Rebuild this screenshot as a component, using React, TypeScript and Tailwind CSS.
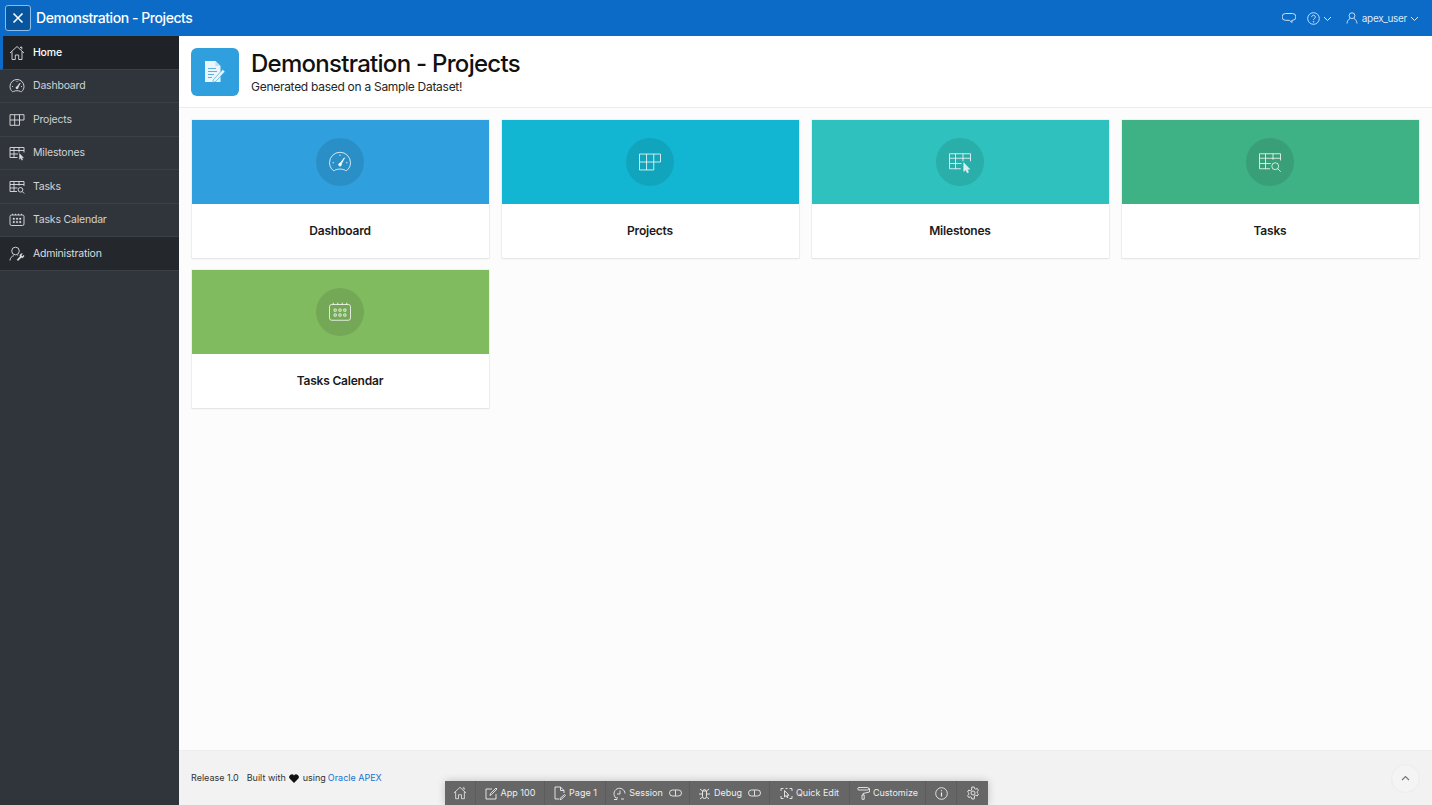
import type { ReactNode } from 'react';

function Svg({ size = 16, className = '', children }: { size?: number; className?: string; children: ReactNode }) {
  return (
    <svg width={size} height={size} viewBox="0 0 16 16" fill="none" stroke="currentColor" strokeWidth={size > 20 ? 0.65 : 0.9} className={className}>
      {children}
    </svg>
  );
}

const HomeIcon = ({ size }: { size?: number }) => (
  <Svg size={size}>
    <path d="M1 8 8 1.500 15 8M3 6.500V14.500H6.300V10H9.700V14.500H13V6.500M11.500 3V2h1.300v2.300" />
  </Svg>
);

const GaugeIcon = ({ size }: { size?: number }) => (
  <Svg size={size}>
    <path d="M3.400 13.600C1.900 12.300 1 10.500 1 8.500a7 7 0 0 1 14 0c0 2-.9 3.800-2.400 5.100-.5.400-1 0-1.500-.3-1.800-.8-4.400-.8-6.200 0-.5.300-1 .7-1.500.3Z" />
    <path d="M8 3v1M3 8.500h1M12 8.500h1" />
    <path d="M7.500 9.500 11 5.200 8.500 10Z" fill="currentColor" />
    <circle cx="8" cy="9.800" r=".9" fill="currentColor" />
  </Svg>
);

const TableIcon = ({ size }: { size?: number }) => (
  <Svg size={size}>
    <path d="M1 2.700h14v5.300H10.500V13.300H1ZM1 8h9.500M5.700 2.700v10.600M10.500 2.700V8" />
  </Svg>
);

const TablePointerIcon = ({ size }: { size?: number }) => (
  <Svg size={size}>
    <path d="M15 7.500V2.500H1v10h7.500M1 5.500h14M1 9h8M5 2.500v10M10 2.500v5" />
    <path d="M10.500 8.500v5.800l1.300-1.200 1 2.100.9-.4-1-2h1.800Z" fill="currentColor" strokeWidth={0.4} />
  </Svg>
);

const TableSearchIcon = ({ size }: { size?: number }) => (
  <Svg size={size}>
    <path d="M15 7V2.500H1v10h7M1 5.500h14M1 9h7.500M5 2.500v10M10 2.500v4" />
    <circle cx="11.500" cy="10.800" r="2.300" />
    <path d="m13.200 12.500 2 2" />
  </Svg>
);

const CalendarIcon = ({ size }: { size?: number }) => (
  <Svg size={size}>
    <rect x="1" y="3" width="14" height="10.500" rx="1.500" />
    <path d="M3.500 1.800v1.200M6.500 1.800v1.200M9.500 1.800v1.200M12.500 1.800v1.200" />
    <path d="M4 6h1.500v1.500H4ZM7.250 6h1.500v1.500h-1.500ZM10.500 6H12v1.500h-1.500ZM4 9.300h1.500v1.500H4ZM7.250 9.300h1.500v1.500h-1.500ZM10.500 9.300H12v1.500h-1.500Z" fill={size && size > 20 ? 'none' : 'currentColor'} strokeWidth={size && size > 20 ? 0.6 : 0.3} />
  </Svg>
);

const AdminIcon = ({ size }: { size?: number }) => (
  <Svg size={size}>
    <circle cx="6.500" cy="5" r="3.800" />
    <path d="M1 14.500c0-2.500 1.800-4.300 4-4.900M8.500 9.400l.7.200" />
    <path d="M9 14.800l3.200-3.200a2 2 0 0 0 2.700-2.500l-1.300 1.200-1-.3-.3-1 1.300-1.200a2 2 0 0 0-2.600 2.700L8 13.800Z" fill="currentColor" strokeWidth={0.3} />
  </Svg>
);

const PageEditIcon = () => (
  <svg width="22" height="24" viewBox="0 0 22 24">
    <path d="M1 1h10.500L16.500 6v16H1Z" fill="#eaf5fc" />
    <path d="M11.500 1v5h5Z" fill="#bfe0f4" />
    <path d="M4 8.500h8M4 11.500h9M4 14.500h6M4 17.500h4" stroke="#5fb0e2" strokeWidth="1.200" />
    <path d="m9.500 19.500 9.300-10 2.200 2-9.300 10-3 1Z" fill="#eaf5fc" stroke="#2f9fdf" strokeWidth=".6" />
  </svg>
);

const nav = [
  { label: 'Home', icon: <HomeIcon /> },
  { label: 'Dashboard', icon: <GaugeIcon /> },
  { label: 'Projects', icon: <TableIcon /> },
  { label: 'Milestones', icon: <TablePointerIcon /> },
  { label: 'Tasks', icon: <TableSearchIcon /> },
  { label: 'Tasks Calendar', icon: <CalendarIcon /> },
  { label: 'Administration', icon: <AdminIcon /> },
];

function navClass(label: string) {
  if (label === 'Home') return 'bg-[#1f2327] text-white font-medium border-l-[3px] border-l-[#0b6bc7] pl-[5px]';
  if (label === 'Administration') return 'bg-[#24282d] text-[#dcdddf] pl-[8px]';
  return 'bg-[#30353c] text-[#d0d2d4] pl-[8px]';
}

const cards = [
  { label: 'Dashboard', color: 'bg-[#309fdd]', circle: 'bg-[#2b8fc7]', icon: <GaugeIcon size={24} /> },
  { label: 'Projects', color: 'bg-[#13b6d2]', circle: 'bg-[#11a4bd]', icon: <TableIcon size={24} /> },
  { label: 'Milestones', color: 'bg-[#2ec1bd]', circle: 'bg-[#29aeaa]', icon: <TablePointerIcon size={24} /> },
  { label: 'Tasks', color: 'bg-[#3eb185]', circle: 'bg-[#389f78]', icon: <TableSearchIcon size={24} /> },
  { label: 'Tasks Calendar', color: 'bg-[#81bb5f]', circle: 'bg-[#74a856]', icon: <CalendarIcon size={24} /> },
];

function Toggle() {
  return (
    <svg width="13" height="8" viewBox="0 0 13 8" fill="none" stroke="currentColor" strokeWidth=".9" className="ml-[3px]">
      <rect x=".5" y="1" width="12" height="6" rx="3" />
      <path d="M6.500 1.200v5.600" />
    </svg>
  );
}

function DevItem({ icon, label, width, toggle }: { icon: ReactNode; label?: string; width: string; toggle?: boolean }) {
  return (
    <div className={`flex h-full items-center justify-center gap-[3px] border-r border-r-[#5c5c5c] last:border-r-0 ${width}`}>
      {icon}
      {label && <span>{label}</span>}
      {toggle && <Toggle />}
    </div>
  );
}

export default function App() {
  return (
    <div className="relative flex h-[805px] w-[1432px] flex-col overflow-hidden bg-[#fcfcfc] font-['Inter',sans-serif] text-[#161616]">
      <header className="flex h-9 shrink-0 items-center bg-[#0b6bc7] text-white">
        <button className="ml-[5px] flex h-[26px] w-[26px] items-center justify-center rounded-[3px] border border-[#8fbce6] bg-[#07559f]">
          <svg width="12" height="12" viewBox="0 0 12 12" stroke="currentColor" strokeWidth="1.600">
            <path d="m1.500 1.500 9 9M10.500 1.500l-9 9" />
          </svg>
        </button>
        <span className="ml-[5px] text-sm leading-none font-medium tracking-[-0.44px]">Demonstration - Projects</span>
        <div className="ml-auto flex items-center text-[10px] text-[#dbe9f7]">
          <svg width="14" height="14" viewBox="0 0 14 14" fill="none" stroke="currentColor" strokeWidth=".9">
            <path d="M3.500 2.500h7a2.700 2.700 0 0 1 0 6.800H9.800l.3 2.200-2.800-2.200H3.500a2.700 2.700 0 0 1 0-6.800Z" />
          </svg>
          <svg width="13" height="13" viewBox="0 0 13 13" fill="none" stroke="currentColor" strokeWidth=".9" className="ml-[11px]">
            <circle cx="6.500" cy="6.500" r="5.800" />
            <path d="M4.700 5a1.800 1.800 0 1 1 2.800 1.500c-.7.500-1 .800-1 1.500" />
            <circle cx="6.500" cy="9.800" r=".4" />
          </svg>
          <svg width="9" height="9" viewBox="0 0 9 9" fill="none" stroke="currentColor" className="ml-[3px]">
            <path d="m1 3 3.500 3.500L8 3" />
          </svg>
          <svg width="12" height="12" viewBox="0 0 12 12" fill="none" stroke="currentColor" strokeWidth=".9" className="ml-[14px]">
            <circle cx="6" cy="3.700" r="2.900" />
            <path d="M1 11.500c0-2.500 1.800-4.400 3-5M11 11.500c0-2.500-1.800-4.400-3-5" />
          </svg>
          <span className="ml-[4px] tracking-[-0.33px]">apex_user</span>
          <svg width="9" height="9" viewBox="0 0 9 9" fill="none" stroke="currentColor" className="mr-[13px] ml-[3px]">
            <path d="m1 3 3.500 3.500L8 3" />
          </svg>
        </div>
      </header>

      <div className="flex min-h-0 flex-1">
        <aside className="w-[179px] shrink-0 bg-[#30353c]">
          {nav.map(item => (
            <div
              key={item.label}
              className={`flex h-[33.5px] items-center gap-[8px] border-b border-b-[#3b4047] pt-[1px] text-[10.5px] tracking-[-0.2px] ${navClass(item.label)}`}
            >
              <span className="flex w-[17px] justify-center text-[#dfe0e2]">{item.icon}</span>
              <span>{item.label}</span>
            </div>
          ))}
        </aside>

        <main className="flex min-w-0 flex-1 flex-col">
          <section className="flex h-[72px] shrink-0 items-center gap-3 border-b border-b-[#ececec] bg-white px-3">
            <div className="flex h-12 w-12 items-center justify-center rounded-md bg-[#309fdd]">
              <PageEditIcon />
            </div>
            <div>
              <h1 className="text-2xl leading-[30px] font-medium tracking-[-0.72px] text-[#111]">Demonstration - Projects</h1>
              <p className="text-xs leading-4 tracking-[-0.28px] text-[#262626]">Generated based on a Sample Dataset!</p>
            </div>
          </section>

          <section className="grid flex-1 grid-cols-4 content-start gap-x-[13px] gap-y-3 px-[13px] py-3">
            {cards.map(card => (
              <div key={card.label} className="h-[138px] bg-white shadow-[0_0_0_1px_rgba(0,0,0,0.04),0_1px_2px_rgba(0,0,0,0.07)]">
                <div className={`flex h-[84px] items-center justify-center pr-px ${card.color}`}>
                  <div className={`flex h-12 w-12 items-center justify-center rounded-full text-white/80 ${card.circle}`}>
                    {card.icon}
                  </div>
                </div>
                <div className="flex h-[54px] items-center justify-center pr-px text-xs font-semibold tracking-[-0.2px] text-[#1b1b1b]">
                  {card.label}
                </div>
              </div>
            ))}
          </section>

          <footer className="flex h-[55px] shrink-0 items-center justify-between border-t border-t-[#ededed] bg-[#f2f2f2] px-3 text-[9px] text-[#333]">
            <div className="flex items-center">
              <span>Release 1.0</span>
              <span className="ml-[8px]">Built with</span>
              <svg width="10" height="9" viewBox="0 0 10 9" fill="#111" className="mr-[4px] ml-[3px]">
                <path d="M5 9 .8 4.800A2.500 2.500 0 0 1 5 1.500a2.500 2.500 0 0 1 4.200 3.300Z" />
              </svg>
              <span>using</span>
              <span className="ml-[2px] text-[#1a73cf]">Oracle APEX</span>
            </div>
            <button className="flex h-[29px] w-[29px] items-center justify-center rounded-full border border-[#ececec] bg-[#f4f4f4] text-[#777]">
              <svg width="9" height="6" viewBox="0 0 9 6" fill="none" stroke="currentColor" strokeWidth="1.200">
                <path d="M1 5 4.500 1.500 8 5" />
              </svg>
            </button>
          </footer>
        </main>
      </div>

      {/* apex developer toolbar, sits over the footer */}
      <div className="absolute bottom-0 left-[445px] flex h-6 w-[543px] items-center bg-[#666666] text-[9px] text-[#eeeeee] shadow-[0_0_8px_rgba(0,0,0,0.2)]">
        <DevItem width="w-[31px]" icon={<HomeIcon size={14} />} />
        <DevItem width="w-[69px]" label="App 100" icon={
          <svg width="13" height="13" viewBox="0 0 13 13" fill="none" stroke="currentColor" strokeWidth=".9">
            <path d="M11 7v5H1V2h6M5 8.500l.4-2L11 1l1 1-5.500 5.600Z" />
          </svg>
        } />
        <DevItem width="w-[61px]" label="Page 1" icon={
          <svg width="13" height="14" viewBox="0 0 13 14" fill="none" stroke="currentColor" strokeWidth=".9">
            <path d="M6 13H2V1h5.500L11 4.500V7M7.500 1v3.500H11M7 12.500l4.500-4 1 1-4.500 4H7Z" />
          </svg>
        } />
        <DevItem width="w-[84px]" label="Session" toggle icon={
          <svg width="13" height="13" viewBox="0 0 13 13" fill="none" stroke="currentColor" strokeWidth=".9">
            <path d="M3 11A5.500 5.500 0 1 1 12 6.500M7 3.500v3.500H4M1 12.500h3v-2.500M8 12h3" />
          </svg>
        } />
        <DevItem width="w-[80px]" label="Debug" toggle icon={
          <svg width="13" height="13" viewBox="0 0 13 13" fill="none" stroke="currentColor" strokeWidth=".9">
            <path d="M4.500 4h4v5.500a2 2 0 0 1-4 0ZM5 4a1.500 1.500 0 0 1 3 0M2 2l2.500 2M11 2 8.500 4M1 7h3.500M8.500 7H12M2 12l2.500-2M11 12 8.500 10" />
          </svg>
        } />
        <DevItem width="w-[80px]" label="Quick Edit" icon={
          <svg width="13" height="13" viewBox="0 0 13 13" fill="none" stroke="currentColor" strokeWidth=".9">
            <path d="M1 4V1.500h2.500M9.500 1.500H12V4M1 9v2.500h2.500M9.500 11.500H12V9M5.500 1.500h2" />
            <path d="M4.500 3.500v6.500l1.600-1.500 1 2.100.9-.4-1-2h2Z" />
          </svg>
        } />
        <DevItem width="w-[76px]" label="Customize" icon={
          <svg width="13" height="14" viewBox="0 0 13 14" fill="none" stroke="currentColor" strokeWidth=".9">
            <path d="M2 1.500h8.500a1 1 0 0 1 0 2.500H2a1.200 1.200 0 0 1 0-2.500ZM11.500 2.700H12.500V6L6 7.500V9" />
            <path d="M5 9h2.200v4.300H5Z" />
          </svg>
        } />
        <DevItem width="w-[31px]" icon={
          <svg width="13" height="13" viewBox="0 0 13 13" fill="none" stroke="currentColor" strokeWidth=".9">
            <circle cx="6.500" cy="6.500" r="5.800" />
            <path d="M6.500 5.500v4M6.500 3.300v1" strokeWidth="1.200" />
          </svg>
        } />
        <DevItem width="flex-1" icon={
          <svg width="14" height="14" viewBox="0 0 14 14" fill="none" stroke="currentColor" strokeWidth=".9">
            <path d="M5.800 1h2.400l.3 1.600 1.300.6 1.400-.8 1.200 2-1.200 1.100v1.400l1.200 1.100-1.200 2-1.400-.8-1.300.6L8.200 13H5.800l-.3-1.600-1.300-.6-1.400.8-1.200-2 1.200-1.100V7.100L1.600 6l1.200-2 1.400.8 1.300-.6Z" />
            <circle cx="7" cy="7" r="2" />
          </svg>
        } />
      </div>
    </div>
  );
}
